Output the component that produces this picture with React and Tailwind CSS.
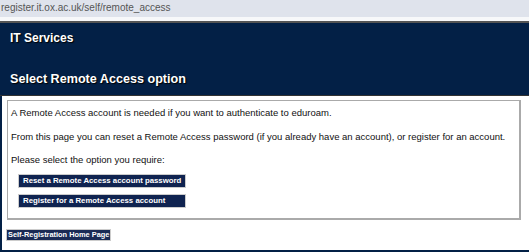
export default function App() {
  return (
    <div className="w-[529px] h-[252px] overflow-hidden bg-white font-['Liberation_Sans',Arial,sans-serif]">
      {/* Browser address bar */}
      <div className="h-[17px] bg-[#dfe3ec] pl-[1px] text-[10px] leading-[15px] text-[#555] whitespace-nowrap">
        register.it.ox.ac.uk/self/remote_access
      </div>
      <div className="h-[4px] bg-[#f7f8fa]" />

      {/* Header */}
      <div className="border-t-2 border-b border-t-[#555] border-b-[#333] bg-[#032046] h-[75px] px-[10px] text-white font-bold [text-shadow:1px_1px_1px_#000]">
        <div className="pt-[8px] text-[12px] leading-[15px]">IT Services</div>
        <div className="mt-[25px] text-[12.6px] leading-[16px]">Select Remote Access option</div>
      </div>

      {/* Body */}
      <div className="h-[156px] border-l-2 border-b-2 border-[#032046] pt-[4px] pl-[5px] pr-[8px]">
        <div className="border border-[#aaa] border-r-2 border-b-2 h-[120px] px-[3px] pt-[5px] text-[9.5px] leading-[13px] text-[#111] whitespace-nowrap">
          <p>A Remote Access account is needed if you want to authenticate to eduroam.</p>
          <p className="mt-[11px]">
            From this page you can reset a Remote Access password (if you already have an account), or register for an account.
          </p>
          <p className="mt-[10px]">Please select the option you require:</p>
          <div className="mt-[8px] ml-[7px] flex flex-col gap-[6px]">
            <button className="w-[168px] h-[14px] bg-[#0f2350] border border-[#ccc] text-left pl-[4px] text-white font-bold text-[7.8px] leading-[12px]">
              Reset a Remote Access account password
            </button>
            <button className="w-[168px] h-[14px] bg-[#0f2350] border border-[#ccc] text-left pl-[4px] text-white font-bold text-[7.8px] leading-[12px]">
              Register for a Remote Access account
            </button>
          </div>
        </div>
        <a href="#" className="inline-block mt-[9px] -ml-[1px] bg-[#1a2a55] text-white font-bold text-[7.4px] leading-[10px] px-[1px] border border-[#ccc]">
          Self-Registration Home Page
        </a>
      </div>
    </div>
  );
}
